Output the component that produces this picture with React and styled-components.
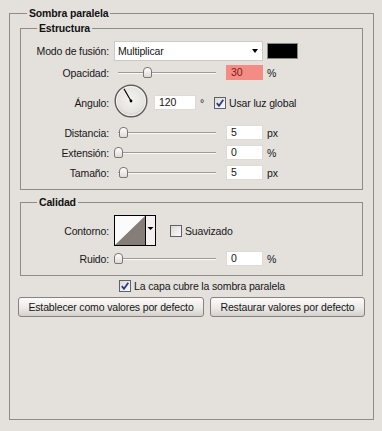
import React from "react";
import styled, { createGlobalStyle } from "styled-components";

const Global = createGlobalStyle`
  html, body { margin: 0; padding: 0; background: #e4e1dd; }
  body {
    font-family: "Liberation Sans", Arial, sans-serif;
    font-size: 10.5px;
    letter-spacing: -0.15px;
    color: #161616;
  }
  * { box-sizing: border-box; }
`;

const Group = styled.section`
  margin: ${(p) => p.$margin || "0"};
  padding: ${(p) => p.$padding || "0"};
  border: 1px solid #8f8c88;
  height: ${(p) => (p.$height ? `${p.$height}px` : "auto")};
`;

const Header = styled.div`
  display: flex;
  height: 13px;
  margin: -7px 0 ${(p) => p.$gap}px;
  padding-left: ${(p) => p.$indent}px;
`;

const Title = styled.h2`
  margin: 0;
  padding: 0 2px;
  font-size: 10.5px;
  font-weight: bold;
  line-height: 13px;
  background: #e4e1dd;
  color: #111;
`;

const Row = styled.div`
  display: flex;
  align-items: center;
  height: ${(p) => p.$h || 15}px;
  margin-top: ${(p) => p.$mt || 0}px;
  padding-left: ${(p) => p.$pl || 0}px;
  white-space: nowrap;
`;

const Label = styled.span`
  width: 88px;
  flex: none;
  text-align: right;
  margin-right: 5px;
`;

const Select = styled.div`
  width: 149px;
  height: 20px;
  background: #fff;
  border: 1px solid #cdcac6;
  display: flex;
  align-items: center;
  justify-content: space-between;
  padding: 0 4px 0 3px;
`;

const Arrow = styled.span`
  width: 0;
  height: 0;
  border-left: 3.5px solid transparent;
  border-right: 3.5px solid transparent;
  border-top: 4px solid #000;
`;

const Swatch = styled.div`
  width: 31px;
  height: 16px;
  margin-left: 4px;
  background: #000;
  border: 1px solid #8a8784;
`;

const SliderBox = styled.div`
  position: relative;
  width: 107px;
  height: 15px;
  flex: none;
  margin-right: 5px;
`;

const Track = styled.div`
  position: absolute;
  left: 4px;
  right: 5px;
  top: 7px;
  height: 1px;
  background: #9d9a96;
  box-shadow: 0 1px 0 #fbfaf9;
`;

const Thumb = styled.div`
  position: absolute;
  top: 2px;
  width: 9px;
  height: 11px;
  margin-left: -4.5px;
  border: 1px solid #7a7774;
  border-radius: 4px 4px 2px 2px;
  background: linear-gradient(#fefefe, #dedbd7);
`;

const Field = styled.div`
  width: ${(p) => p.$w || 37}px;
  height: 15px;
  flex: none;
  background: ${(p) => (p.$alert ? "#f38c84" : "#ffffff")};
  color: ${(p) => (p.$alert ? "#7c1d18" : "#161616")};
  border: 1px solid ${(p) => (p.$alert ? "#f38c84" : "#dedbd7")};
  padding-left: 4px;
  line-height: 13px;
  margin-left: ${(p) => p.$ml || 0}px;
`;

const Unit = styled.span`
  margin-left: ${(p) => p.$ml || 4}px;
`;

const DialBox = styled.div`
  align-self: flex-start;
  width: 34px;
  height: 34px;
  flex: none;
`;

const Box = styled.span`
  width: 12px;
  height: 12px;
  flex: none;
  border: 1px solid #5d6068;
  background: linear-gradient(135deg, #dcdad6, #fbfbfa);
  margin-left: ${(p) => p.$ml || 0}px;
  margin-right: 3px;
  display: inline-flex;
  align-items: center;
  justify-content: center;
`;

const ContourBox = styled.div`
  width: 42px;
  height: 31px;
  flex: none;
`;

const Buttons = styled.div`
  display: grid;
  grid-template-columns: 186px 155px;
  gap: 6px;
  margin: 5px -3px 0 -2px;
`;

const Button = styled.button`
  height: 20px;
  font: inherit;
  letter-spacing: inherit;
  color: #161616;
  border: 1px solid #85827f;
  border-radius: 3px;
  background: linear-gradient(#fcfbfa, #eceae7 55%, #d4d1cd);
  padding: 0;
  line-height: 18px;
  text-align: center;
`;

function Slider({ value }) {
  return (
    <SliderBox>
      <Track />
      <Thumb style={{ left: `${4 + value * 98}px` }} />
    </SliderBox>
  );
}

function Check({ checked, ml }) {
  return (
    <Box $ml={ml}>
      {checked && (
        <svg width="8" height="8" viewBox="0 0 8 8">
          <path d="M0.8 4.2 L3 6.8 L7.3 0.8" fill="none" stroke="#283b8a" strokeWidth="1.8" />
        </svg>
      )}
    </Box>
  );
}

function Dial({ angle }) {
  const r = (angle * Math.PI) / 180;
  const cx = 17;
  const cy = 17;
  const x2 = cx + Math.cos(r) * 14;
  const y2 = cy - Math.sin(r) * 14;
  return (
    <DialBox>
      <svg width="34" height="34" viewBox="0 0 34 34">
        <defs>
          <radialGradient id="dg" cx="50%" cy="45%" r="55%">
            <stop offset="0%" stopColor="#f4f3f1" />
            <stop offset="75%" stopColor="#e6e4e0" />
            <stop offset="100%" stopColor="#c9c6c2" />
          </radialGradient>
        </defs>
        <circle cx="17" cy="17" r="15.8" fill="url(#dg)" stroke="#5f5c59" strokeWidth="1.4" />
        <circle cx="17" cy="17" r="14.6" fill="none" stroke="#fdfdfc" strokeWidth="0.8" />
        <line x1={cx} y1={cy} x2={x2} y2={y2} stroke="#000" strokeWidth="1.1" />
        <circle cx={cx} cy={cy} r="1.4" fill="#000" />
      </svg>
    </DialBox>
  );
}

function Contour() {
  return (
    <ContourBox>
      <svg width="42" height="31" viewBox="0 0 42 31">
        <rect x="0.5" y="0.5" width="41" height="30" fill="#f2f1ef" stroke="#000" />
        <rect x="1" y="1" width="30" height="29" fill="#fbfbfb" />
        <polygon points="1,30 31,1 31,30" fill="#857d78" />
        <line x1="31.5" y1="0.5" x2="31.5" y2="30.5" stroke="#000" />
        <polygon points="33.5,12 39.5,12 36.5,15" fill="#000" />
      </svg>
    </ContourBox>
  );
}

export default function App() {
  return (
    <>
      <Global />
      <Group $margin="13px 8px 11px 9px" $padding="0 10px" $height={407}>
        <Header $indent={7} $gap={8}>
          <Title>Sombra paralela</Title>
        </Header>

        <Group $padding="0 0 9px">
          <Header $indent={16} $gap={6}>
            <Title>Estructura</Title>
          </Header>
          <Row $h={20}>
            <Label>Modo de fusión:</Label>
            <Select>
              <span>Multiplicar</span>
              <Arrow />
            </Select>
            <Swatch />
          </Row>
          <Row $mt={4}>
            <Label>Opacidad:</Label>
            <Slider value={0.3} />
            <Field $alert>30</Field>
            <Unit>%</Unit>
          </Row>
          <Row $h={37} $mt={4}>
            <Label>Ángulo:</Label>
            <Dial angle={120} />
            <Field $w={42} $ml={6}>120</Field>
            <Unit>°</Unit>
            <Check checked ml={10} />
            <span>Usar luz global</span>
          </Row>
          <Row $mt={4}>
            <Label>Distancia:</Label>
            <Slider value={0.055} />
            <Field>5</Field>
            <Unit>px</Unit>
          </Row>
          <Row $mt={5}>
            <Label>Extensión:</Label>
            <Slider value={0.005} />
            <Field>0</Field>
            <Unit>%</Unit>
          </Row>
          <Row $mt={5}>
            <Label>Tamaño:</Label>
            <Slider value={0.055} />
            <Field>5</Field>
            <Unit>px</Unit>
          </Row>
        </Group>

        <Group $margin="12px 0 0" $padding="0 0 9px">
          <Header $indent={16} $gap={6}>
            <Title>Calidad</Title>
          </Header>
          <Row $h={31}>
            <Label>Contorno:</Label>
            <Contour />
            <Check ml={14} />
            <span>Suavizado</span>
          </Row>
          <Row $mt={5}>
            <Label>Ruido:</Label>
            <Slider value={0.005} />
            <Field>0</Field>
            <Unit>%</Unit>
          </Row>
        </Group>

        <Row $h={12} $mt={4} $pl={99}>
          <Check checked />
          <span>La capa cubre la sombra paralela</span>
        </Row>

        <Buttons>
          <Button>Establecer como valores por defecto</Button>
          <Button>Restaurar valores por defecto</Button>
        </Buttons>
      </Group>
    </>
  );
}
